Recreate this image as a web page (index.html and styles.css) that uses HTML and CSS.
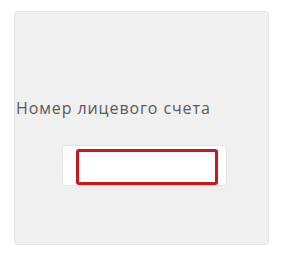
FILE: index.html
```html
<!DOCTYPE html>
<html lang="ru">
<head>
<meta charset="utf-8">
<link rel="stylesheet" href="styles.css">
</head>
<body>
<div class="card">
  <label class="label" for="acc">Номер лицевого счета</label>
  <div class="field">
    <input id="acc" class="input" type="text">
  </div>
</div>
</body>
</html>
```
FILE: styles.css
```css
html, body {
  margin: 0;
  padding: 0;
  background: #ffffff;
}
body {
  padding: 11px 0 0 14px;
  font-family: "Open Sans", "Liberation Sans", sans-serif;
}
.card {
  box-sizing: border-box;
  width: 255px;
  height: 234px;
  background: #f0f0f0;
  border: 1px solid #e2e2e2;
  border-radius: 4px;
  padding: 86px 0 0 1px;
  display: flex;
  flex-direction: column;
  align-items: flex-start;
}
.label {
  display: block;
  font-size: 16px;
  line-height: 20px;
  color: #595959;
  letter-spacing: 0.9px;
}
.field {
  box-sizing: border-box;
  margin: 27px 0 0 46px;
  width: 165px;
  height: 41px;
  background: #ffffff;
  border: 1px solid #e4e4e4;
  border-radius: 4px;
  padding: 3px 0 0 13px;
}
.input {
  box-sizing: border-box;
  display: block;
  width: 142px;
  height: 36px;
  margin: 0;
  padding: 0 6px;
  border: 3px solid #c8171e;
  border-radius: 3px;
  background: #ffffff;
  outline: none;
  font: inherit;
}
```
